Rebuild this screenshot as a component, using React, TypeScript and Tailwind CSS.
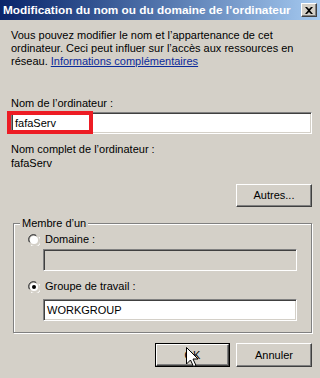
import React from 'react';

const sunken =
    'border border-t-[#808080] border-l-[#808080] border-r-white border-b-white shadow-[inset_1px_1px_0_#404040,inset_-1px_-1px_0_#d4d0c8]';
const raised =
    'border border-t-white border-l-white border-r-[#404040] border-b-[#404040] shadow-[inset_-1px_-1px_0_#808080]';

const Radio: React.FC<{ checked?: boolean; label: string }> = ({ checked, label }) => (
    <div className="flex items-center h-[13px]">
        <svg width="12" height="12" viewBox="0 0 12 12" className="shrink-0">
            <path d="M1 8 A5.5 5.5 0 0 1 8 1" fill="none" stroke="#808080" strokeWidth="1" />
            <path d="M2 8.5 A4.5 4.5 0 0 1 8.5 2" fill="none" stroke="#404040" strokeWidth="1" />
            <circle cx="6" cy="6" r="4" fill="white" />
            <path d="M3 11 A5.5 5.5 0 0 0 11 3" fill="none" stroke="#ffffff" strokeWidth="1" />
            {checked && <circle cx="6" cy="6" r="2" fill="black" />}
        </svg>
        <span className="ml-[5px]">{label}</span>
    </div>
);

const App: React.FC = () => {
    return (
        <div className="relative w-[320px] h-[378px] overflow-hidden bg-[#d4d0c8] text-[11px] leading-[13px] text-black font-['Liberation_Sans',Arial,sans-serif]">
            {/* title bar */}
            <div className="h-[20px] flex items-center justify-between pl-[3px] pr-[3px] bg-gradient-to-r from-[#0a246a] to-[#a6caf0]">
                <span className="text-white font-bold text-[11.8px] whitespace-nowrap">
                    Modification du nom ou du domaine de l’ordinateur
                </span>
                <div className={`w-[16px] h-[14px] bg-[#d4d0c8] flex items-center justify-center ${raised}`}>
                    <svg width="8" height="7" viewBox="0 0 8 7">
                        <path d="M0 0 L2 0 L4 2 L6 0 L8 0 L5 3.5 L8 7 L6 7 L4 5 L2 7 L0 7 L3 3.5 Z" fill="black" />
                    </svg>
                </div>
            </div>

            <div className="pl-[11px] pr-[8px] pt-[9px]">
                <p>
                    Vous pouvez modifier le nom et l’appartenance de cet
                    <br />
                    ordinateur. Ceci peut influer sur l’accès aux ressources en
                    <br />
                    réseau. <span className="text-[#0b2a9a] underline">Informations complémentaires</span>
                </p>

                <p className="mt-[29px]">Nom de l’ordinateur :</p>
                <div className="relative mt-[2px]">
                    <div className={`h-[22px] bg-white flex items-center pl-[3px] ${sunken}`}>fafaServ</div>
                    <div className="absolute -left-[4px] -top-[1px] w-[86px] h-[23px] border-4 border-[#ed1c24]" />
                </div>

                <p className="mt-[9px]">Nom complet de l’ordinateur :</p>
                <p className="mt-[1px]">fafaServ</p>

                <div className="flex justify-end mt-[14px]">
                    <div className={`w-[76px] h-[23px] flex items-center justify-center ${raised}`}>Autres...</div>
                </div>

                <div className="relative ml-[2px] mt-[16px] h-[110px] border border-[#808080] shadow-[inset_1px_1px_0_white,1px_1px_0_white]">
                    <span className="absolute left-[6px] -top-[7px] px-[2px] bg-[#d4d0c8]">Membre d’un</span>
                    <div className="pl-[14px] pt-[9px]">
                        <Radio label="Domaine :" />
                        <div className={`ml-[15px] mt-[3px] w-[254px] h-[22px] bg-[#d4d0c8] ${sunken}`} />
                        <div className="mt-[9px]">
                            <Radio checked label="Groupe de travail :" />
                        </div>
                        <div className={`ml-[15px] mt-[6px] w-[254px] h-[22px] bg-white flex items-center pl-[3px] ${sunken}`}>
                            WORKGROUP
                        </div>
                    </div>
                </div>

                <div className="flex justify-end gap-[6px] mt-[10px]">
                    <div className="relative w-[75px] h-[24px] border border-black">
                        <div className={`h-full flex items-center justify-center ${raised}`}>OK</div>
                        <svg className="absolute left-[30px] top-[3px]" width="13" height="21" viewBox="0 0 13 21">
                            <path d="M0.5 0.5 L0.5 17 L4.5 13 L7.5 19.5 L10 18.5 L7 12 L12 12 Z" fill="white" stroke="black" strokeWidth="1" />
                        </svg>
                    </div>
                    <div className={`w-[76px] h-[24px] flex items-center justify-center ${raised}`}>Annuler</div>
                </div>
            </div>
        </div>
    );
};

export default App;
